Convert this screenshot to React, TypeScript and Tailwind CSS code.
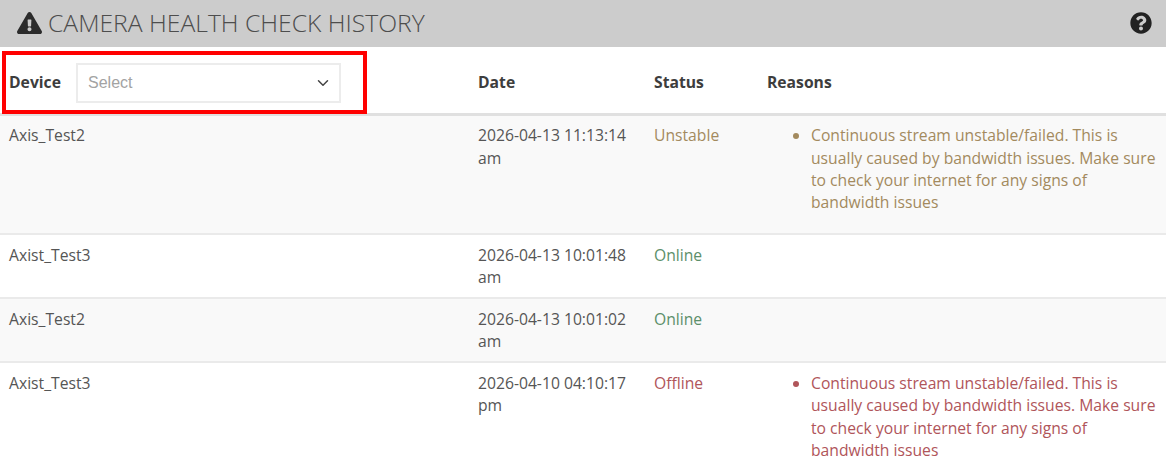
import { FaExclamationTriangle, FaQuestionCircle } from "react-icons/fa";
import { ChevronDown } from "lucide-react";

const reason = "Continuous stream unstable/failed. This is usually caused by bandwidth issues. Make sure to check your internet for any signs of bandwidth issues";

type Row = { device: string; date: string; status: string; color: string; bg: string; reason?: boolean };

const rows: Row[] = [
  { device: "Axis_Test2", date: "2026-04-13 11:13:14 am", status: "Unstable", color: "text-[#a38a5e]", bg: "bg-[#f9f9f9]", reason: true },
  { device: "Axist_Test3", date: "2026-04-13 10:01:48 am", status: "Online", color: "text-[#5c8f6a]", bg: "bg-white" },
  { device: "Axis_Test2", date: "2026-04-13 10:01:02 am", status: "Online", color: "text-[#5c8f6a]", bg: "bg-[#f9f9f9]" },
  { device: "Axist_Test3", date: "2026-04-10 04:10:17 pm", status: "Offline", color: "text-[#b0555a]", bg: "bg-white", reason: true },
];

export default function App() {
  return (
    <div className="relative h-[475px] w-[1170px] overflow-hidden bg-white font-['Open_Sans',sans-serif] text-[15.7px] leading-[22.4px] text-[#555555]">
      <div className="w-[1166px]">
        <div className="flex h-[47px] items-center justify-between bg-[#cccccc] pb-[2px] pl-[17px] pr-[14px]">
          <h1 className="flex items-center gap-[6px] text-[24.7px] leading-[45px] font-light text-[#4d4d4d]">
            <FaExclamationTriangle className="h-[24px] w-[25px] text-[#2b2b2b]" />
            CAMERA HEALTH CHECK HISTORY
          </h1>
          <FaQuestionCircle className="h-[22px] w-[22px] text-[#222222]" />
        </div>
        <table className="w-full table-fixed border-collapse">
          <colgroup>
            <col className="w-[469px]" />
            <col className="w-[176px]" />
            <col className="w-[113px]" />
            <col />
          </colgroup>
          <thead>
            <tr className="h-[67px] border-b-[3px] border-[#e0e0e0] text-left font-bold text-[#3d3d3d]">
              <th className="px-[9px] pt-[5px]">
                <div className="flex items-center gap-[16px]">
                  <span className="w-[52px]">Device</span>
                  <div className="ml-[-1px] mt-[2px] flex h-[40px] w-[265px] items-center justify-between border-2 border-[#ececec] bg-white pl-[10px] pr-[7px] text-[16px] font-normal text-[#a3a3a3] font-['Liberation_Sans',sans-serif]">
                    Select
                    <ChevronDown className="h-[18px] w-[18px] text-[#444444]" strokeWidth={2} />
                  </div>
                </div>
              </th>
              <th className="px-[9px] pt-[5px]">Date</th>
              <th className="px-[9px] pt-[5px]">Status</th>
              <th className="px-[9px] pt-[5px]">Reasons</th>
            </tr>
          </thead>
          <tbody>
            {rows.map((r, i) => (
              <tr key={i} className={`${r.bg} border-b-2 border-[#eaeaea] align-top`}>
                <td className="px-[9px] pb-[8.6px] pt-[8.6px]">{r.device}</td>
                <td className="px-[9px] pb-[8.6px] pt-[8.6px]">{r.date}</td>
                <td className={`px-[9px] pb-[8.6px] pt-[8.6px] ${r.color}`}>{r.status}</td>
                <td className={`px-[9px] pb-[8.6px] pt-[8.6px] ${r.color}`}>
                  {r.reason && (
                    <ul className="mb-[11px] list-disc pl-[44px]">
                      <li>{reason}</li>
                    </ul>
                  )}
                </td>
              </tr>
            ))}
          </tbody>
        </table>
      </div>
      <div className="pointer-events-none absolute left-[2px] top-[51px] h-[63px] w-[365px] border-[4px] border-[#ff0000]" />
    </div>
  );
}
